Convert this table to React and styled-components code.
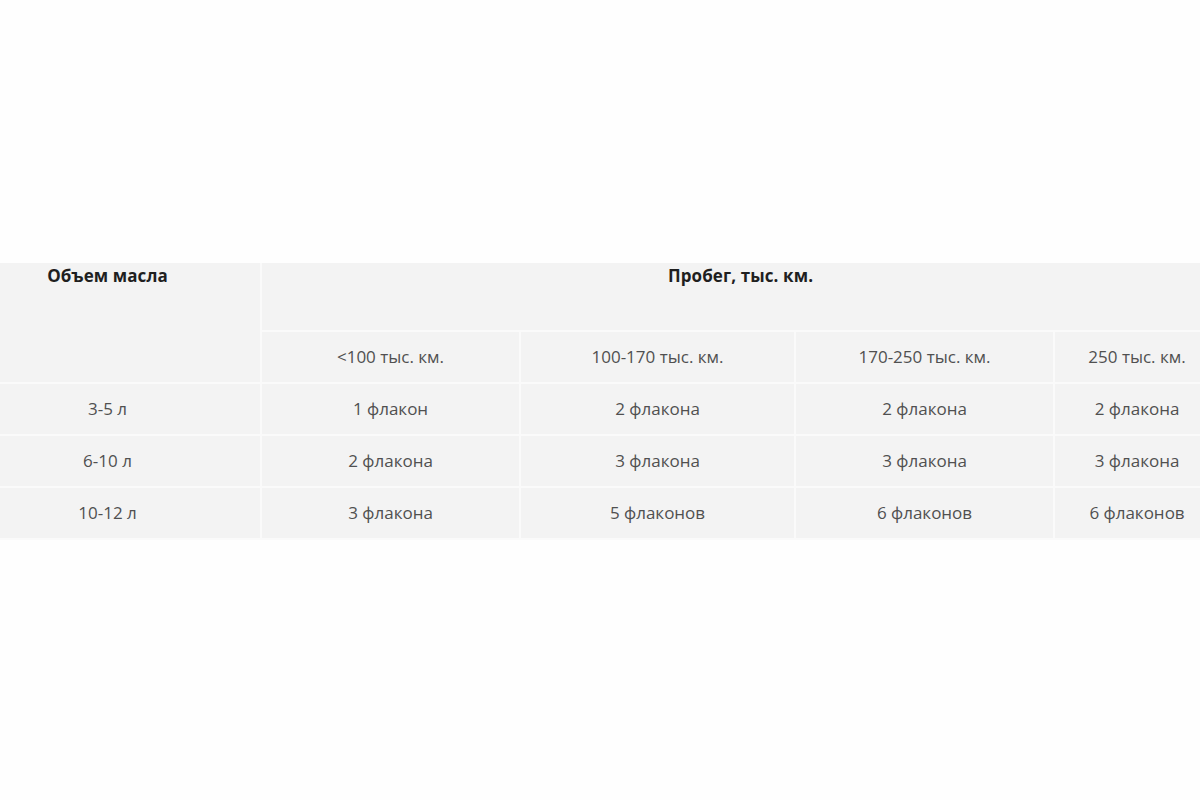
import React from "react";
import styled, { createGlobalStyle } from "styled-components";

const GlobalStyle = createGlobalStyle`
  html, body {
    margin: 0;
    padding: 0;
    background: #fefefe;
    overflow: hidden;
  }
`;

const mileage = ["<100 тыс. км.", "100-170 тыс. км.", "170-250 тыс. км.", "250 тыс. км."];

const rows = [
  { volume: "3-5 л", values: ["1 флакон", "2 флакона", "2 флакона", "2 флакона"] },
  { volume: "6-10 л", values: ["2 флакона", "3 флакона", "3 флакона", "3 флакона"] },
  { volume: "10-12 л", values: ["3 флакона", "5 флаконов", "6 флаконов", "6 флаконов"] },
];

const colWidths = [307, 259, 275, 259, 166];

const App = () => {
  return (
    <Page>
      <GlobalStyle />
      <Table>
        <colgroup>
          {colWidths.map((w, i) => (
            <col key={i} style={{ width: w }} />
          ))}
        </colgroup>
        <thead>
          <tr>
            <HeadCell rowSpan={2}>Объем масла</HeadCell>
            <HeadCell colSpan={4} $tall>
              Пробег, тыс. км.
            </HeadCell>
          </tr>
          <tr>
            {mileage.map((m) => (
              <Cell key={m}>{m}</Cell>
            ))}
          </tr>
        </thead>
        <tbody>
          {rows.map((r) => (
            <tr key={r.volume}>
              <Cell>{r.volume}</Cell>
              {r.values.map((v, i) => (
                <Cell key={i}>{v}</Cell>
              ))}
            </tr>
          ))}
        </tbody>
      </Table>
    </Page>
  );
};

export default App;

const Page = styled.div`
  width: 1200px;
  height: 800px;
  padding-top: 263px;
  box-sizing: border-box;
  overflow: hidden;
  font-family: "Open Sans", "Liberation Sans", sans-serif;
`;

const Table = styled.table`
  margin-left: -47px;
  width: 1266px;
  table-layout: fixed;
  border-collapse: collapse;
  background: #f3f3f3;
`;

const HeadCell = styled.th`
  border: 2px solid #fafafa;
  border-top: none;
  height: ${(p) => (p.$tall ? "65px" : "auto")};
  padding: 2px 8px 0;
  vertical-align: top;
  text-align: center;
  font-size: 17px;
  font-weight: 700;
  color: #1f1f1f;
  line-height: 22px;
  letter-spacing: 0.1px;
`;

const Cell = styled.td`
  border: 2px solid #fafafa;
  height: 50px;
  padding: 0 8px;
  vertical-align: middle;
  text-align: center;
  font-size: 17px;
  font-weight: 400;
  color: #505050;
  line-height: 22px;
  white-space: nowrap;
`;
